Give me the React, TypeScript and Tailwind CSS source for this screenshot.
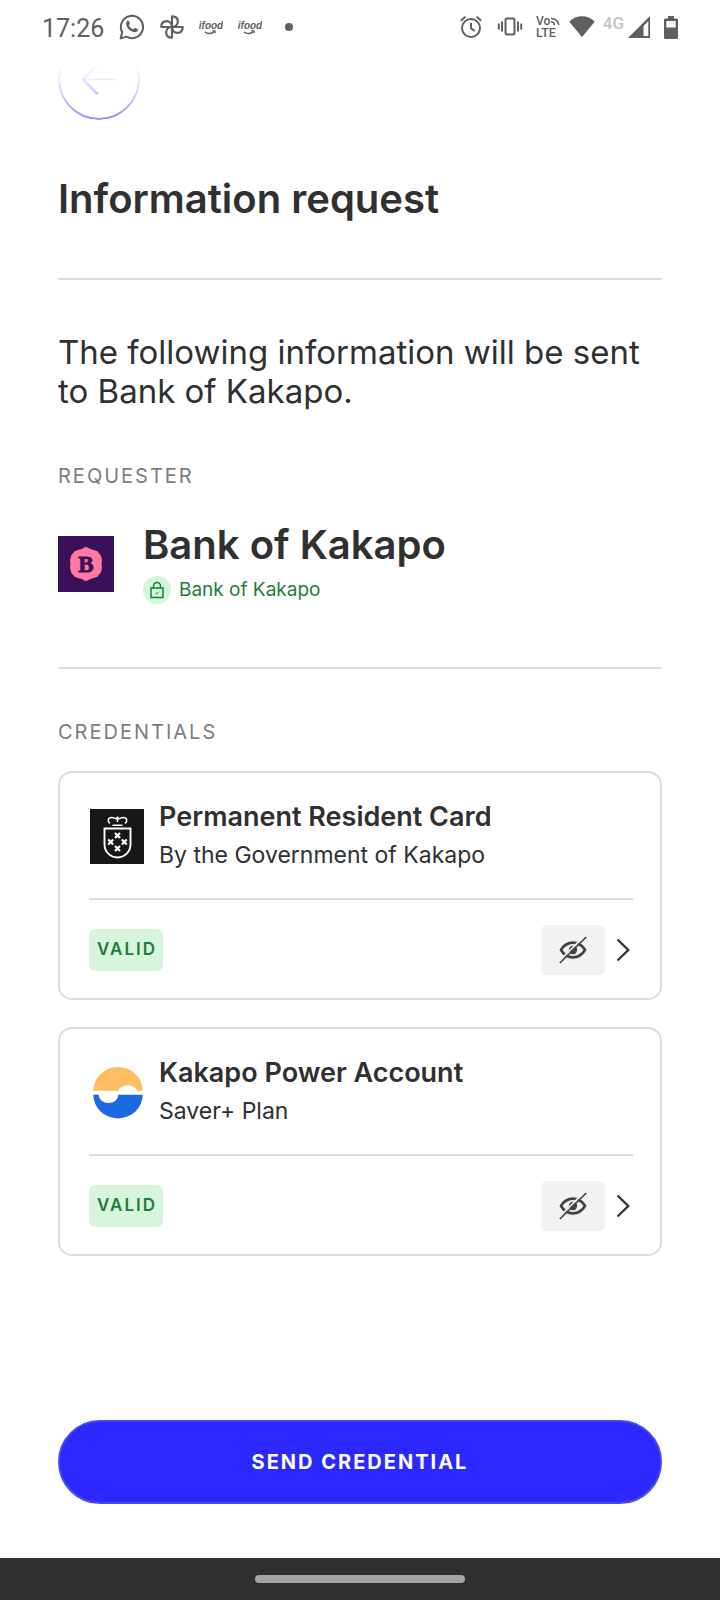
import type { ReactNode } from "react";

function WhatsAppIcon() {
  return (
    <svg className="size-[26px]" viewBox="0 0 26 26" fill="none" aria-hidden="true">
      <path d="M1.6 24.4l1.6-6.1A11.1 11.1 0 1 1 7.4 22.6z" stroke="#5f5f5f" strokeWidth="2" strokeLinejoin="round" />
      <path
        d="M8.3 6.8c.5-.5 1.2-.4 1.5.2l1 2.2c.2.4.1.8-.2 1.1l-.8 1c.9 1.9 2.3 3.2 4.3 4.1l1.1-1.2c.3-.3.7-.4 1.1-.2l2.1 1c.6.3.7.8.4 1.4-.7 1.4-2.2 2.1-3.9 1.7-4-1-7-4-7.7-7.6-.2-1.4.2-2.8 1.1-3.7z"
        fill="#5f5f5f"
      />
    </svg>
  );
}

function PinwheelIcon() {
  const petal = "M12 12V1.300c3.500 0 5.800 2 5.800 5.200 0 2.700-2 5.500-5.800 5.500z";
  return (
    <svg className="size-6" viewBox="0 0 24 24" fill="none" stroke="#5f5f5f" strokeWidth="2.200" strokeLinejoin="round" aria-hidden="true">
      <path d={petal} />
      <path d={petal} transform="rotate(90 12 12)" />
      <path d={petal} transform="rotate(180 12 12)" />
      <path d={petal} transform="rotate(270 12 12)" />
    </svg>
  );
}

function IfoodIcon() {
  return (
    <svg className="h-6 w-6" viewBox="0 0 24 24" aria-hidden="true">
      <text x="12" y="14" textAnchor="middle" fontFamily="Liberation Sans, sans-serif" fontSize="10" fontWeight="700" fontStyle="italic" fill="#5f5f5f">
        ifood
      </text>
      <path d="M6 17c2.500 2.300 6.500 2.200 9.500-.6" fill="none" stroke="#5f5f5f" strokeWidth="1.500" />
      <path d="M13.300 15.800h2.800v2.400" fill="none" stroke="#5f5f5f" strokeWidth="1.200" />
    </svg>
  );
}

function AlarmIcon() {
  return (
    <svg className="size-6" viewBox="0 0 24 24" fill="none" stroke="#5f5f5f" strokeWidth="2" aria-hidden="true">
      <circle cx="12" cy="13" r="9" />
      <path d="M12 8v5.300l3.600 2.600M1.800 5.700l4.600-4M22.200 5.700l-4.600-4" />
    </svg>
  );
}

function VibrateIcon() {
  return (
    <svg className="h-6 w-[26px]" viewBox="0 0 26 24" fill="none" stroke="#5f5f5f" strokeWidth="2" aria-hidden="true">
      <rect x="8.500" y="3.500" width="9" height="16" rx="1.200" />
      <path d="M5 6.500v10M21 6.500v10M1.800 8.500v6M24.200 8.500v6" />
    </svg>
  );
}

function VolteIcon() {
  return (
    <svg className="size-[26px]" viewBox="0 0 26 26" fill="#5f5f5f" fontFamily="Roboto, sans-serif" fontWeight="500" aria-hidden="true">
      <text x="1" y="11" fontSize="12">Vo</text>
      <text x="1" y="23" fontSize="12.500">LTE</text>
      <g fill="none" stroke="#5f5f5f" strokeWidth="1.500">
        <path d="M16 7.800c2 0 3.300 1.200 3.400 3.200M16 4.400c3.800 0 7.300 2.600 7.800 6.600" />
      </g>
    </svg>
  );
}

function WifiIcon() {
  return (
    <svg className="h-6 w-[26px]" viewBox="0 0 26 24" aria-hidden="true">
      <path d="M.3 6.700C7.500 -.5 18.500 -.5 25.700 6.700L13 22z" fill="#5f5f5f" />
    </svg>
  );
}

function SignalIcon() {
  return (
    <svg className="size-[22px]" viewBox="0 0 22 22" aria-hidden="true">
      <path fillRule="evenodd" d="M22 0v22H0zM20.300 5l-4.800 5v10h4.800z" fill="#5f5f5f" />
    </svg>
  );
}

function BatteryIcon() {
  return (
    <svg className="h-[23px] w-[14px]" viewBox="0 0 14 23" aria-hidden="true">
      <path fillRule="evenodd" d="M4 0h6v2.500h2.500A1.500 1.500 0 0 1 14 4v17.500a1.500 1.500 0 0 1-1.500 1.500h-11A1.500 1.500 0 0 1 0 21.500V4a1.500 1.500 0 0 1 1.500-1.500H4zM2.300 5v6.500h9.400V5z" fill="#5f5f5f" />
    </svg>
  );
}

function BankLogo() {
  return (
    <svg className="mb-3 size-14 shrink-0" viewBox="0 0 56 56" aria-hidden="true">
      <rect width="56" height="56" fill="#3a1159" />
      <path
        d="M28 12l5 2.300 5.500 1.700 3.500 4.200 1 4-.5 3.800.5 3.800-1 4-3.500 4.200-5.500 1.700-5 2.300-5-2.300-5.500-1.700-3.500-4.200-1-4 .5-3.800-.5-3.800 1-4 3.500-4.200 5.500-1.700z"
        fill="#ff79a2"
        stroke="#ff79a2"
        strokeWidth="2"
        strokeLinejoin="round"
      />
      <text x="28" y="36" textAnchor="middle" fontFamily="Liberation Serif, serif" fontWeight="700" fontSize="23" fill="#3a1159" stroke="#3a1159" strokeWidth="0.800">B</text>
    </svg>
  );
}

function LockBadge() {
  return (
    <svg className="size-7 shrink-0" viewBox="0 0 28 28" fill="none" stroke="#1e7d3c" aria-hidden="true">
      <circle cx="14" cy="14" r="14" fill="#d3f5da" stroke="none" />
      <rect x="8" y="12" width="12" height="9.500" strokeWidth="1.500" />
      <path d="M10.500 12v-2a3.500 3.500 0 0 1 7 0v2" strokeWidth="1.500" />
      <path d="M12.300 17l1.200 1 2.300-2.300" strokeWidth="1" />
    </svg>
  );
}

function CrestLogo() {
  return (
    <svg className="size-full" viewBox="0 0 55 55" fill="none" stroke="#fff" aria-hidden="true">
      <rect x="1" width="54" height="55" fill="#171717" stroke="none" />
      <path d="M21 14.500c-3-2.500-2-6 1.500-6 2.800 0 4 1.500 6 1.500s3.200-1.500 6-1.500c3.500 0 4.500 3.500 1.500 6M28.500 7.500v5.500M27 9h3M23.500 16.200h10" strokeWidth="1.500" />
      <path d="M15.500 19.500h26v16a13 13 0 0 1-26 0z" strokeWidth="1.900" />
      <path d="M26 24l5 5m0-5l-5 5M26 37l5 5m0-5l-5 5M19.200 30.500l5 5m0-5l-5 5M32.800 30.500l5 5m0-5l-5 5" strokeWidth="2.200" />
    </svg>
  );
}

function PowerLogo() {
  return (
    <svg className="size-full" viewBox="0 0 55 55" aria-hidden="true">
      <path d="M4.300 25.700a24.700 23.700 0 0 1 49.400 0H48a9.400 6.500 0 0 0-18.600 0z" fill="#ffbd62" />
      <path d="M4.300 29.700h5.400a9.800 8.400 0 0 0 19.600 0h24.400a24.700 23.700 0 0 1-49.400 0z" fill="#1b6ae4" />
    </svg>
  );
}

function HiddenEyeIcon() {
  return (
    <svg className="size-7" viewBox="0 0 28 28" fill="none" stroke="#444" aria-hidden="true">
      <path d="M2 14c3-5 7-7.300 12-7.300S23 9 26 14c-3 5-7 7.300-12 7.300S5 19 2 14z" strokeWidth="2.700" strokeLinejoin="round" />
      <circle cx="14" cy="14" r="4.200" fill="#444" stroke="none" />
      <path d="M-.5 25.700L25.900 -.3" stroke="#f2f2f2" strokeWidth="1.800" />
      <path d="M.8 27L27.200 1" strokeWidth="1.700" />
    </svg>
  );
}

function StatusBar() {
  return (
    <header className="flex h-[54px] items-center justify-between px-[42px] text-[#5f5f5f]">
      <div className="flex items-center gap-[15px]">
        <time className="pt-1 font-[Roboto,sans-serif] text-[25px] leading-7">17:26</time>
        <WhatsAppIcon />
        <PinwheelIcon />
        <IfoodIcon />
        <IfoodIcon />
        <span className="ml-2 size-2 rounded-full bg-[#5f5f5f]" />
      </div>
      <div className="flex items-center">
        <AlarmIcon />
        <span className="w-[14px]" />
        <VibrateIcon />
        <span className="w-3" />
        <VolteIcon />
        <span className="w-2" />
        <WifiIcon />
        <span className="pb-2 pl-2 pr-1 font-[Roboto,sans-serif] text-[17px] font-medium leading-5 text-[#c4c4c4]">4G</span>
        <SignalIcon />
        <span className="w-[14px]" />
        <BatteryIcon />
      </div>
    </header>
  );
}

function CredentialCard({ title, subtitle, logo }: { title: string; subtitle: string; logo: ReactNode }) {
  return (
    <article className="rounded-[14px] border-2 border-[#dcdcdc] pl-[29px] pr-[27px]">
      <div className="flex items-center gap-[15px] border-b-2 border-[#dcdcdc] pb-6 pt-[25px]">
        <div className="size-[55px] shrink-0">{logo}</div>
        <div>
          <h3 className="text-[27px] font-semibold leading-[38px]">{title}</h3>
          <p className="text-[23px] leading-[38px]">{subtitle}</p>
        </div>
      </div>
      <div className="flex items-center pb-[23px] pt-[25px]">
        <span className="flex h-[42px] items-center rounded-md bg-[#d7f5dc] pl-2 pr-[6px] text-[17px] font-semibold tracking-[2px] text-[#1e7d3c]">VALID</span>
        <button type="button" aria-label={`Show details of ${title}`} className="ml-auto flex h-[50px] w-16 items-center justify-center rounded-md bg-[#f2f2f2]">
          <HiddenEyeIcon />
        </button>
        <button type="button" aria-label={`Open ${title}`} className="flex h-[50px] w-7 items-center justify-end pr-[3px]">
          <svg className="h-6 w-[14px]" viewBox="0 0 14 24" fill="none" stroke="#2f2f2f" strokeWidth="2.200" aria-hidden="true">
            <path d="M1.500 1.500L12.300 12 1.500 22.500" />
          </svg>
        </button>
      </div>
    </article>
  );
}

export default function App() {
  return (
    <div className="flex min-h-screen flex-col bg-white font-[Inter,sans-serif] text-[#303030]">
      <StatusBar />
      <main className="flex flex-1 flex-col px-[58px]">
        <button
          type="button"
          aria-label="Back"
          className="-mt-4 flex size-[82px] items-center justify-center rounded-full border-2 border-[#2c28ff] [mask-image:linear-gradient(to_bottom,transparent_30%,rgb(0_0_0/0.1)_50%,rgb(0_0_0/0.25)_70%,rgb(0_0_0/0.55))]"
        >
          <svg className="size-9" viewBox="0 0 36 36" fill="none" stroke="#2c28ff" aria-hidden="true">
            <path d="M36 18.500H2" strokeWidth="1.500" />
            <path d="M17 3L2 18.500l15 15" strokeWidth="2.600" />
          </svg>
        </button>

        <h1 className="mt-[53px] text-[40px] font-semibold leading-[52px]">Information request</h1>
        <hr className="mt-[53px] border-t-2 border-[#dcdcdc]" />

        <p className="mt-[53px] text-[33px] leading-[39px]">The following information will be sent to Bank of Kakapo.</p>

        <h2 className="mt-[51px] text-[20px] leading-7 tracking-[2px] text-[#7d7d7d]">REQUESTER</h2>
        <section className="mt-[29px] flex items-end gap-[29px]">
          <BankLogo />
          <div>
            <p className="text-[40px] font-semibold leading-[52px]">Bank of Kakapo</p>
            <p className="mt-[5px] flex items-center gap-2 text-[19px] leading-7 text-[#1e7d3c]">
              <LockBadge />
              Bank of Kakapo
            </p>
          </div>
        </section>
        <hr className="mt-[63px] border-t-2 border-[#dcdcdc]" />

        <h2 className="mt-[49px] text-[20px] leading-7 tracking-[2px] text-[#7d7d7d]">CREDENTIALS</h2>
        <section className="mt-[25px] flex flex-col gap-[27px]">
          <CredentialCard title="Permanent Resident Card" subtitle="By the Government of Kakapo" logo={<CrestLogo />} />
          <CredentialCard title="Kakapo Power Account" subtitle="Saver+ Plan" logo={<PowerLogo />} />
        </section>

        <button type="button" className="mb-[54px] mt-auto h-[84px] rounded-full border-2 border-[#4a46f0] bg-[#2c28ff] text-[20px] font-bold tracking-[2px] text-white">
          SEND CREDENTIAL
        </button>
      </main>
      <footer className="flex h-[42px] items-center justify-center bg-[#2f2f2f]">
        <span className="h-2 w-[210px] rounded-full bg-[#a3a3a3]" />
      </footer>
    </div>
  );
}
